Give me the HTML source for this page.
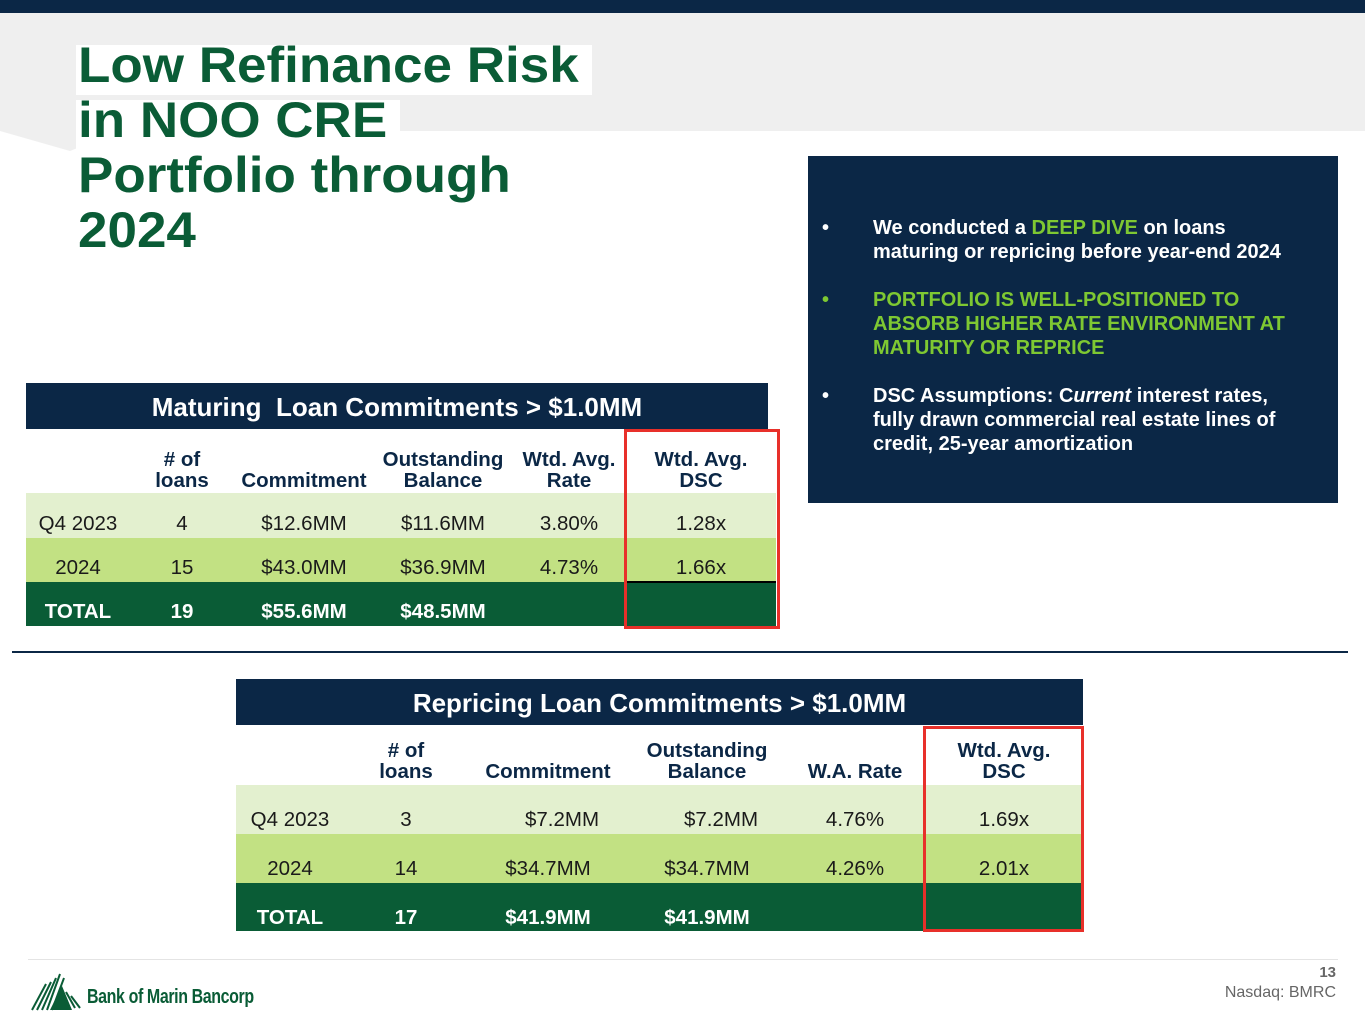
<!DOCTYPE html>
<html><head><style>
body{margin:0;width:1365px;height:1024px;position:relative;background:#fff;font-family:"Liberation Sans",Arial,sans-serif;overflow:hidden}
.a{position:absolute}
.c{position:absolute;text-align:center;transform:translateX(-50%);white-space:nowrap}
.h{font-weight:bold;font-size:20.5px;line-height:21px;color:#0b2746}
.d{font-size:20.5px;color:#1a1a1a}
.w{font-size:20.5px;color:#fff;font-weight:bold}
</style></head><body>
<div class="a" style="left:0;top:0;width:1365px;height:13px;background:#0b2746"></div>
<svg class="a" style="left:0;top:13px" width="1365" height="140"><polygon points="0,0 1365,0 1365,118 120,118 70,138 0,118" fill="#efefef"/></svg>
<div class="a" style="left:76px;top:45px;width:516px;height:50px;background:#fff"></div>
<div class="a" style="left:76px;top:100px;width:324px;height:50px;background:#fff"></div>
<div class="a" style="left:78px;top:38px;font-size:50px;line-height:55px;font-weight:bold;color:#0a5c36;transform:scaleX(1.06);transform-origin:left;white-space:nowrap">Low Refinance Risk<br>in NOO CRE<br>Portfolio through<br>2024</div>

<div class="a" style="left:808px;top:156px;width:530px;height:347px;background:#0b2746"></div>
<div class="a" style="left:822px;top:216px;width:492px;color:#fff;font-weight:bold;font-size:20px;line-height:24px">
<div style="position:relative;padding-left:51px"><span class="a" style="left:0">•</span>We conducted a <span style="color:#7ec832">DEEP DIVE</span> on loans maturing or repricing before year-end 2024</div>
<div style="position:relative;padding-left:51px;margin-top:24px;color:#7ec832"><span class="a" style="left:0">•</span>PORTFOLIO IS WELL-POSITIONED TO ABSORB HIGHER RATE ENVIRONMENT AT MATURITY OR REPRICE</div>
<div style="position:relative;padding-left:51px;margin-top:24px"><span class="a" style="left:0">•</span>DSC Assumptions: C<i>urrent</i> interest rates, fully drawn commercial real estate lines of credit, 25-year amortization</div>
</div>

<!-- table1 -->
<div class="a" style="left:26px;top:383px;width:742px;height:46px;background:#0b2746;color:#fff;font-weight:bold;font-size:26px;line-height:48px;text-align:center">Maturing&nbsp; Loan Commitments &gt; $1.0MM</div>
<div class="a" style="left:26px;top:493px;width:750px;height:45px;background:#e3f0cf"></div>
<div class="a" style="left:26px;top:538px;width:750px;height:44px;background:#c2e183"></div>
<div class="a" style="left:26px;top:582px;width:750px;height:44px;background:#0a5c36"></div>
<div class="a" style="left:624px;top:581px;width:152px;height:2px;background:#000"></div>
<div class="c h" style="left:182px;top:449px"># of<br>loans</div>
<div class="c h" style="left:304px;top:470px">Commitment</div>
<div class="c h" style="left:443px;top:449px">Outstanding<br>Balance</div>
<div class="c h" style="left:569px;top:449px">Wtd. Avg.<br>Rate</div>
<div class="c h" style="left:701px;top:449px">Wtd. Avg.<br>DSC</div>
<div class="c d" style="left:78px;top:512px">Q4 2023</div><div class="c d" style="left:182px;top:512px">4</div><div class="c d" style="left:304px;top:512px">$12.6MM</div><div class="c d" style="left:443px;top:512px">$11.6MM</div><div class="c d" style="left:569px;top:512px">3.80%</div><div class="c d" style="left:701px;top:512px">1.28x</div>
<div class="c d" style="left:78px;top:556px">2024</div><div class="c d" style="left:182px;top:556px">15</div><div class="c d" style="left:304px;top:556px">$43.0MM</div><div class="c d" style="left:443px;top:556px">$36.9MM</div><div class="c d" style="left:569px;top:556px">4.73%</div><div class="c d" style="left:701px;top:556px">1.66x</div>
<div class="c w" style="left:78px;top:600px">TOTAL</div><div class="c w" style="left:182px;top:600px">19</div><div class="c w" style="left:304px;top:600px">$55.6MM</div><div class="c w" style="left:443px;top:600px">$48.5MM</div>
<div class="a" style="left:624px;top:429px;width:150px;height:194px;border:3px solid #e8302a"></div>

<div class="a" style="left:12px;top:651px;width:1336px;height:2px;background:#0b2746"></div>

<!-- table2 -->
<div class="a" style="left:236px;top:679px;width:847px;height:46px;background:#0b2746;color:#fff;font-weight:bold;font-size:26px;line-height:48px;text-align:center">Repricing Loan Commitments &gt; $1.0MM</div>
<div class="a" style="left:236px;top:785px;width:847px;height:49px;background:#e3f0cf"></div>
<div class="a" style="left:236px;top:834px;width:847px;height:49px;background:#c2e183"></div>
<div class="a" style="left:236px;top:883px;width:847px;height:48px;background:#0a5c36"></div>
<div class="c h" style="left:406px;top:740px"># of<br>loans</div>
<div class="c h" style="left:548px;top:761px">Commitment</div>
<div class="c h" style="left:707px;top:740px">Outstanding<br>Balance</div>
<div class="c h" style="left:855px;top:761px">W.A. Rate</div>
<div class="c h" style="left:1004px;top:740px">Wtd. Avg.<br>DSC</div>
<div class="c d" style="left:290px;top:808px">Q4 2023</div><div class="c d" style="left:406px;top:808px">3</div><div class="c d" style="left:562px;top:808px">$7.2MM</div><div class="c d" style="left:721px;top:808px">$7.2MM</div><div class="c d" style="left:855px;top:808px">4.76%</div><div class="c d" style="left:1004px;top:808px">1.69x</div>
<div class="c d" style="left:290px;top:857px">2024</div><div class="c d" style="left:406px;top:857px">14</div><div class="c d" style="left:548px;top:857px">$34.7MM</div><div class="c d" style="left:707px;top:857px">$34.7MM</div><div class="c d" style="left:855px;top:857px">4.26%</div><div class="c d" style="left:1004px;top:857px">2.01x</div>
<div class="c w" style="left:290px;top:906px">TOTAL</div><div class="c w" style="left:406px;top:906px">17</div><div class="c w" style="left:548px;top:906px">$41.9MM</div><div class="c w" style="left:707px;top:906px">$41.9MM</div>
<div class="a" style="left:923px;top:726px;width:155px;height:200px;border:3px solid #e8302a"></div>

<div class="a" style="left:28px;top:959px;width:1310px;height:1px;background:#e4e4e4"></div>
<svg class="a" style="left:30px;top:972px" width="52" height="40"><g stroke="#0a5c36" stroke-width="2"><line x1="2" y1="38" x2="16" y2="12"/><line x1="7" y1="38" x2="21" y2="10"/><line x1="12" y1="38" x2="26" y2="6"/><line x1="17" y1="38" x2="30" y2="2"/><line x1="22" y1="38" x2="34" y2="6"/><line x1="36" y1="20" x2="45" y2="36"/><line x1="41" y1="24" x2="50" y2="36"/></g><polygon points="20,38 32,14 42,38" fill="#0a5c36"/></svg>
<div class="a" style="left:87px;top:986px;font-size:20px;font-weight:bold;color:#0a5c36;transform:scaleX(0.8);transform-origin:left;white-space:nowrap;letter-spacing:-0.5px">Bank of Marin Bancorp</div>
<div class="a" style="right:29px;top:964px;font-size:15px;font-weight:bold;color:#666">13</div>
<div class="a" style="right:29px;top:984px;font-size:16px;color:#666">Nasdaq: BMRC</div>
</body></html>
